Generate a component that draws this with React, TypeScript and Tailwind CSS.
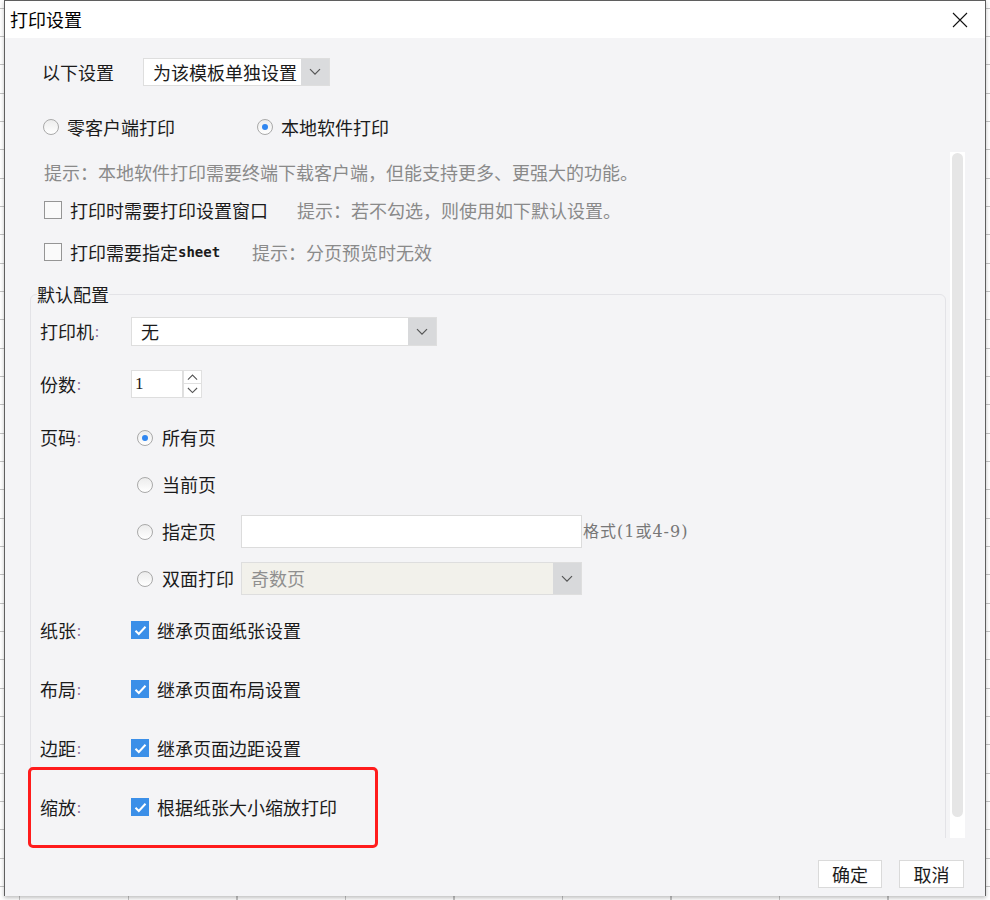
import React from "react";

function Chevron({ up = false, size = 12 }: { up?: boolean; size?: number }) {
  return (
    <svg width={size} height={size * 0.6} viewBox="0 0 12 7" className={up ? "rotate-180" : ""}>
      <path d="M1 1 L6 6 L11 1" fill="none" stroke="#555" strokeWidth="1.2" />
    </svg>
  );
}

function Radio({ checked = false }: { checked?: boolean }) {
  return (
    <span className="w-[16px] h-[16px] rounded-full border border-[#a9a9a9] bg-gradient-to-b from-[#ececec] to-white flex items-center justify-center shrink-0">
      {checked && <span className="w-[6px] h-[6px] rounded-full bg-[#2f86f0]" />}
    </span>
  );
}

function Checkbox({ checked = false }: { checked?: boolean }) {
  if (checked) {
    return (
      <span className="w-[18px] h-[18px] bg-[#3b8fe8] flex items-center justify-center shrink-0">
        <svg width="13" height="11" viewBox="0 0 13 11">
          <path d="M1.5 5.8 L4.8 9 L11.5 1.8" fill="none" stroke="white" strokeWidth="2" />
        </svg>
      </span>
    );
  }
  return <span className="w-[18px] h-[18px] border border-[#959595] bg-[#fafafa] shrink-0" />;
}

function Label({ text }: { text: string }) {
  return (
    <span className="w-[91px] shrink-0 flex items-center">
      {text}
      <span className="text-[#8a6a9c] text-[14px] ml-[1px]">:</span>
    </span>
  );
}

function CheckRow({ label, text }: { label: string; text: string }) {
  return (
    <div className="flex items-center h-[24px]">
      <Label text={label} />
      <Checkbox checked />
      <span className="ml-[8px]">{text}</span>
    </div>
  );
}

export default function App() {
  return (
    <div className="relative w-[990px] h-[900px] overflow-hidden bg-white bg-[image:repeating-linear-gradient(180deg,transparent_0px,transparent_7.6px,#c4c4c4_7.6px,#c4c4c4_8.6px,transparent_8.6px,transparent_28.33px),repeating-linear-gradient(90deg,transparent_0px,transparent_19.5px,#c4c4c4_19.5px,#c4c4c4_20.5px,transparent_20.5px,transparent_108.5px)] font-['Noto_Sans_CJK_SC','Noto_Sans',sans-serif] text-[18px] text-[#1b1b1b]">
      <div className="ml-[4px] w-[982px] h-[896px] flex flex-col border-x border-t border-[#5f5f5f] shadow-[0_2px_4px_rgba(0,0,0,0.25)]">
        {/* Title bar */}
        <div className="h-[37px] bg-white flex items-center justify-between pl-[5px] pr-[17px] shrink-0">
          <span className="leading-[24px] text-[18px] text-black -mt-[2px]">打印设置</span>
          <svg width="16" height="16" viewBox="0 0 16 16">
            <path d="M1 1 L15 15 M15 1 L1 15" stroke="#111" strokeWidth="1.1" />
          </svg>
        </div>

        {/* Body */}
        <div className="flex-1 flex flex-col bg-[#f4f4f6]">
          <div className="mt-[20px] pl-[37px] h-[28px] flex items-center">
            <span className="w-[101px] shrink-0">以下设置</span>
            <div className="w-[187px] h-[28px] flex border border-[#dedede] bg-white">
              <span className="flex-1 pl-[9px] leading-[26px]">为该模板单独设置</span>
              <span className="w-[28px] bg-[#dadbdd] flex items-center justify-center">
                <Chevron />
              </span>
            </div>
          </div>

          <div className="mt-[31px] h-[20px] pl-[38px] flex items-center">
            <div className="w-[214px] flex items-center">
              <Radio />
              <span className="ml-[8px]">零客户端打印</span>
            </div>
            <div className="flex items-center">
              <Radio checked />
              <span className="ml-[8px]">本地软件打印</span>
            </div>
          </div>

          {/* Scroll region */}
          <div className="mt-[13px] h-[688px] flex overflow-hidden shrink-0">
            <div className="flex-1 flex flex-col">
              <div className="mt-[10px] pl-[39px] h-[24px] leading-[24px] text-[#8a8a8a]">
                提示：本地软件打印需要终端下载客户端，但能支持更多、更强大的功能。
              </div>
              <div className="mt-[14px] pl-[39px] h-[24px] flex items-center">
                <div className="w-[253px] flex items-center">
                  <Checkbox />
                  <span className="ml-[8px]">打印时需要打印设置窗口</span>
                </div>
                <span className="text-[#8a8a8a]">提示：若不勾选，则使用如下默认设置。</span>
              </div>
              <div className="mt-[18px] pl-[39px] h-[24px] flex items-center">
                <div className="w-[208px] flex items-center">
                  <Checkbox />
                  <span className="ml-[8px]">打印需要指定</span>
                  <span className="font-['DejaVu_Sans_Mono',monospace] text-[14px] font-bold">sheet</span>
                </div>
                <span className="text-[#8a8a8a]">提示：分页预览时无效</span>
              </div>

              <fieldset className="mt-[19px] ml-[25px] w-[916px] h-[600px] border border-[#e3e3e7] rounded-[6px] pl-[9px] shrink-0">
                <legend className="-ml-[3px] leading-[22px] text-[18px]">默认配置</legend>

                <div className="mt-[12px] h-[29px] flex items-center">
                  <Label text="打印机" />
                  <div className="w-[306px] h-[29px] flex border border-[#dedede] bg-white">
                    <span className="flex-1 pl-[9px] leading-[27px]">无</span>
                    <span className="w-[28px] bg-[#d8d9db] flex items-center justify-center">
                      <Chevron />
                    </span>
                  </div>
                </div>

                <div className="mt-[24px] h-[28px] flex items-center">
                  <Label text="份数" />
                  <div className="w-[52px] h-[28px] border border-[#dedede] bg-white pl-[3px] leading-[26px] font-['Liberation_Serif',serif] text-[17px]">
                    1
                  </div>
                  <div className="w-[19px] h-[28px] flex flex-col">
                    <span className="h-[14px] border border-[#e0e0e0] bg-white flex items-center justify-center">
                      <Chevron up size={11} />
                    </span>
                    <span className="h-[14px] border border-t-0 border-[#e0e0e0] bg-white flex items-center justify-center">
                      <Chevron size={11} />
                    </span>
                  </div>
                </div>

                <div className="mt-[23px] flex">
                  <div className="h-[33px] flex items-center">
                    <Label text="页码" />
                  </div>
                  <div className="flex flex-col gap-[14px] pl-[6px]">
                    <div className="h-[33px] flex items-center">
                      <Radio checked />
                      <span className="ml-[9px]">所有页</span>
                    </div>
                    <div className="h-[33px] flex items-center">
                      <Radio />
                      <span className="ml-[9px]">当前页</span>
                    </div>
                    <div className="h-[33px] flex items-center">
                      <Radio />
                      <span className="ml-[9px] w-[79px]">指定页</span>
                      <div className="w-[341px] h-[33px] border border-[#dcdcdc] bg-white" />
                      <span className="ml-[1px] text-[16px] text-[#777] tracking-[1px] font-['DejaVu_Serif','Noto_Sans_CJK_SC',serif]">
                        格式(1或4-9)
                      </span>
                    </div>
                    <div className="h-[33px] flex items-center">
                      <Radio />
                      <span className="ml-[9px] w-[79px]">双面打印</span>
                      <div className="w-[341px] h-[33px] flex border border-[#dedede] bg-[#f2f1eb]">
                        <span className="flex-1 pl-[9px] leading-[31px] text-[#8f8f8f]">奇数页</span>
                        <span className="w-[28px] bg-[#d8d9db] flex items-center justify-center">
                          <Chevron />
                        </span>
                      </div>
                    </div>
                  </div>
                </div>

                <div className="mt-[23px] flex flex-col gap-[35px]">
                  <CheckRow label="纸张" text="继承页面纸张设置" />
                  <CheckRow label="布局" text="继承页面布局设置" />
                  <CheckRow label="边距" text="继承页面边距设置" />
                  <CheckRow label="缩放" text="根据纸张大小缩放打印" />
                </div>
              </fieldset>
            </div>

            {/* Scrollbar */}
            <div className="w-[15px] mr-[20px] mt-[2px] h-[686px] bg-white flex justify-center pt-[1px] shrink-0">
              <div className="w-[11px] h-[664px] rounded-full bg-[#e6e6e6]" />
            </div>
          </div>

          <div className="mt-[22px] h-[28px] flex justify-end gap-[17px] pr-[21px]">
            <button className="w-[64px] h-[28px] bg-white border border-[#dadada] leading-[26px] text-[18px]">确定</button>
            <button className="w-[65px] h-[28px] bg-white border border-[#dadada] leading-[26px] text-[18px]">取消</button>
          </div>
        </div>
      </div>

      {/* Annotation */}
      <div className="absolute left-[28px] top-[767px] w-[350px] h-[81px] border-[3px] border-[#ff1c1c] rounded-[5px]" />
    </div>
  );
}
